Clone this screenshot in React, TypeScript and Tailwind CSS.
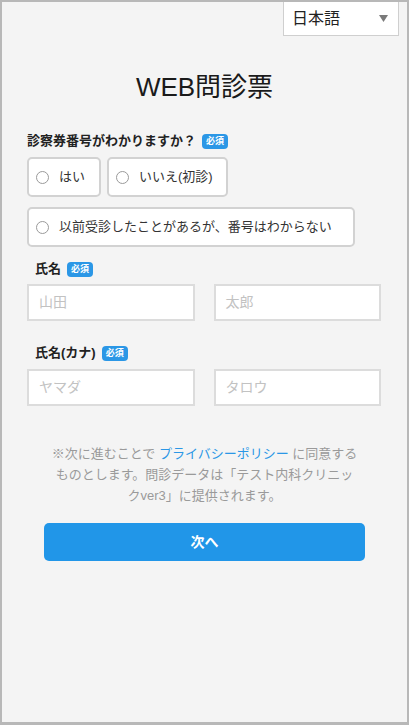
const font = { fontFamily: '"Liberation Sans", "Noto Sans CJK JP", sans-serif' };

function Badge() {
  return (
    <span className="ml-[6px] inline-flex h-[15px] items-center rounded-[4px] bg-[#2b97e6] px-[4px] text-[9px] font-bold leading-none text-white">
      必須
    </span>
  );
}

function RadioBox({ label, className = "" }: { label: string; className?: string }) {
  return (
    <div
      className={
        "flex h-[40px] items-center whitespace-nowrap rounded-[5px] border-2 border-[#d2d2d2] bg-white pl-[7px] " + className
      }
    >
      <span className="h-[13px] w-[13px] shrink-0 rounded-full border border-[#9a9a9a] bg-white" />
      <span className="ml-[10px] text-[13px] text-[#333]">{label}</span>
    </div>
  );
}

function TextInput({ placeholder }: { placeholder: string }) {
  return (
    <div className="flex h-[37px] flex-1 items-center border-2 border-[#dcdcdc] bg-white px-[10px] text-[14px] text-[#c2c2c2]">
      {placeholder}
    </div>
  );
}

export default function App() {
  return (
    <div
      className="flex h-[725px] w-[409px] flex-col border-x-2 border-t-2 border-b-[3px] border-[#b8b8b8] bg-[#f4f4f4] text-[#222]"
      style={font}
    >
      {/* 言語切替 */}
      <div className="flex justify-end pr-[8px]">
        <div className="flex h-[34px] w-[116px] items-center justify-between border-x border-b border-[#cfcfcf] bg-white pl-[8px] pr-[10px]">
          <span className="text-[16px] text-[#222]">日本語</span>
          <svg width="9" height="7" viewBox="0 0 9 7">
            <path d="M0 0h9L4.5 7z" fill="#7a7a7a" />
          </svg>
        </div>
      </div>

      <h1 className="mt-[35px] text-center text-[26px] leading-[32px] text-[#1a1a1a]">WEB問診票</h1>

      <div className="px-[25px]">
        <div className="mt-[28px] flex h-[20px] items-center text-[13px] font-bold">
          診察券番号がわかりますか？
          <Badge />
        </div>

        <div className="mt-[6px] flex gap-[6px]">
          <RadioBox label="はい" className="w-[74px]" />
          <RadioBox label="いいえ(初診)" className="w-[121px]" />
        </div>
        <RadioBox label="以前受診したことがあるが、番号はわからない" className="mt-[10px] w-[328px]" />

        <div className="mt-[12px] flex h-[20px] items-center pl-[8px] text-[13px] font-bold">
          氏名
          <Badge />
        </div>
        <div className="mt-[5px] flex gap-[19px] pr-[1px]">
          <TextInput placeholder="山田" />
          <TextInput placeholder="太郎" />
        </div>

        <div className="mt-[22px] flex h-[20px] items-center pl-[8px] text-[13px] font-bold">
          氏名(カナ)
          <Badge />
        </div>
        <div className="mt-[6px] flex gap-[19px] pr-[1px]">
          <TextInput placeholder="ヤマダ" />
          <TextInput placeholder="タロウ" />
        </div>
      </div>

      <p className="mx-auto mt-[37px] w-[308px] text-center text-[13px] leading-[21px] text-[#9a9a9a]">
        ※次に進むことで <span className="text-[#2b97e6]">プライバシーポリシー</span> に同意するものとします。問診データは「テスト内科クリニックver3」に提供されます。
      </p>

      <div className="px-[42px]">
        <button className="mt-[17px] h-[38px] w-full rounded-[5px] bg-[#2196e8] text-[14px] font-bold text-white">
          次へ
        </button>
      </div>
    </div>
  );
}
